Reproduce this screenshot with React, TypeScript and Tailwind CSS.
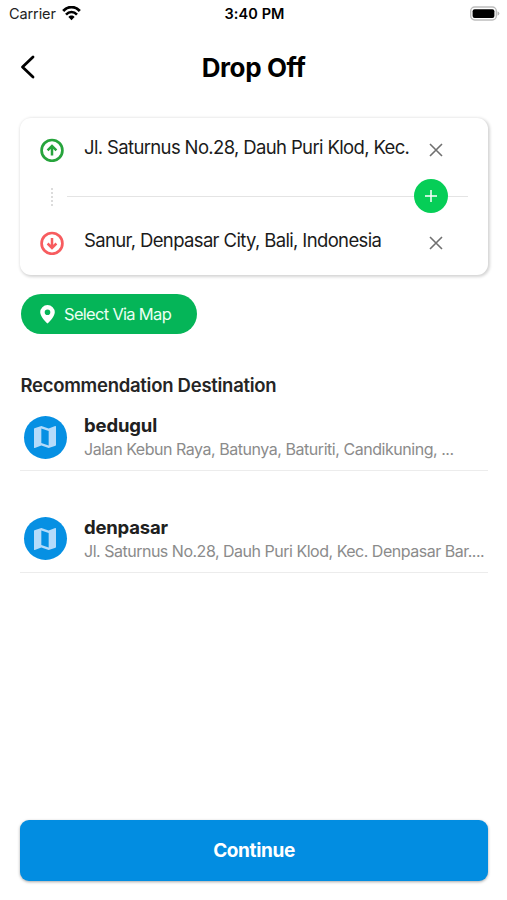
import React from "react";

function StatusBar() {
  return (
    <div className="grid h-7 grid-cols-3 items-center pr-[7px] pl-[9px]">
      <div className="flex items-center gap-[6px]">
        <span className="text-[14.5px] leading-[28px] tracking-[-0.1px] text-[#222]">Carrier</span>
        <svg width="19" height="15" viewBox="0 0 19 15" fill="none" className="-mt-[2px]">
          <path d="M1.2 5C5.8-0.2 13.2-0.2 17.8 5" stroke="#000" strokeWidth="2.8" />
          <path d="M4 8.6C7.2 5.2 11.8 5.2 15 8.6" stroke="#000" strokeWidth="2.6" />
          <path d="M6.4 11C8.1 9.1 10.9 9.1 12.6 11L9.5 14.2Z" fill="#000" />
        </svg>
      </div>
      <span className="text-center text-[14.5px] leading-[28px] font-semibold tracking-[0.1px] whitespace-nowrap text-black">3:40 PM</span>
      <svg width="31" height="15" viewBox="0 0 31 15" className="-mt-[2px] justify-self-end">
        <rect x="1.7" y="1" width="25.6" height="13" rx="4" fill="#fff" stroke="#bdbdbd" strokeWidth="1.4" />
        <rect x="3.6" y="3.2" width="21.8" height="8.8" rx="2" fill="#000" />
        <path d="M28.5 5.2Q30.4 6 30.4 7.5Q30.4 9 28.5 9.8Z" fill="#b5b5b5" />
      </svg>
    </div>
  );
}

function ArrowCircle({ direction }: { direction: "up" | "down" }) {
  const up = direction === "up";
  return (
    <svg width="24" height="24" viewBox="0 0 24 24" fill="none" stroke={up ? "#27a43c" : "#f75c5f"} className="shrink-0">
      <circle cx="12" cy="12.4" r="10.4" strokeWidth="2.7" />
      <path d={up ? "M12 17.6V8.4M7.6 12.3L12 7.9L16.4 12.3" : "M12 7V16.4M7.6 12.5L12 16.9L16.4 12.5"} strokeWidth="2.5" />
    </svg>
  );
}

function Clear() {
  return (
    <svg width="14" height="14" viewBox="0 0 14 14" stroke="#707070" strokeWidth="1.6" className="shrink-0">
      <path d="M1 1L13 13M13 1L1 13" />
    </svg>
  );
}

function Stop({ direction, text }: { direction: "up" | "down"; text: string }) {
  return (
    <div className="flex h-16 items-center pl-5">
      <ArrowCircle direction={direction} />
      <span className="mb-[6px] ml-5 w-[345px] text-[18.5px] leading-6 tracking-[-0.64px] whitespace-nowrap text-[#1b1b1b]">{text}</span>
      <Clear />
    </div>
  );
}

function Place({ name, address, tracking, nameTracking }: { name: string; address: string; tracking: string; nameTracking: string }) {
  return (
    <li className="flex h-[62px] items-start border-b-[1.5px] border-[#ececec] pt-[7px] pl-[3px]">
      <span className="-mt-[0.5px] ml-[0.5px] flex size-[43px] shrink-0 items-center justify-center rounded-full bg-[#0690e3]">
        <svg width="22" height="22" viewBox="3 3 18 18">
          <path
            fill="#b5dbfa"
            d="M20.5 3l-.16.03L15 5.1 9 3 3.36 4.9c-.21.07-.36.25-.36.48V20.5c0 .28.22.5.5.5l.16-.03L9 18.9l6 2.1 5.64-1.9c.21-.07.36-.25.36-.48V3.5c0-.28-.22-.5-.5-.5zM15 19l-6-2.11V5l6 2.11V19z"
          />
        </svg>
      </span>
      <div className="ml-[17.5px]">
        <p className={`mt-[-2px] text-[18.5px] leading-[22px] font-bold text-[#202020] ${nameTracking}`}>{name}</p>
        <p className={`mt-[2px] text-[16px] leading-[22px] whitespace-nowrap text-[#8b8b8b] ${tracking}`}>{address}</p>
      </div>
    </li>
  );
}

export default function App() {
  return (
    <main className="flex h-[900px] w-[507px] flex-col overflow-hidden bg-white font-['Inter','Liberation_Sans',sans-serif]">
      <StatusBar />
      <header className="grid h-[78px] grid-cols-[40px_1fr_40px] items-center px-5">
        <svg width="15" height="24" viewBox="0 0 15 24" fill="none" stroke="#000" strokeWidth="2.8" strokeLinecap="round" strokeLinejoin="round">
          <path d="M13 2L2.5 12L13 22" />
        </svg>
        <h1 className="mt-px text-center text-[26px] leading-8 font-bold tracking-[-0.4px] text-black">Drop Off</h1>
      </header>

      <section className="mx-5 mt-3 h-[157px] w-[468px] rounded-[11px] bg-white shadow-[1px_1px_3px_1px_rgba(0,0,0,0.17)]">
        <Stop direction="up" text="Jl. Saturnus No.28, Dauh Puri Klod, Kec." />
        <div className="flex h-[29px] items-center pr-[20px] pl-[31px]">
          <span className="h-[18px] border-l-2 border-dotted border-[#dcdcdc]" />
          <span className="ml-[14px] h-[1.5px] flex-1 bg-[#e4e4e4]" />
          <button className="-mt-px flex size-[34px] shrink-0 items-center justify-center rounded-full bg-[#06ce57]">
            <svg width="12" height="12" viewBox="0 0 12 12" stroke="#fff" strokeWidth="1.5">
              <path d="M6 0V12M0 6H12" />
            </svg>
          </button>
          <span className="h-[1.5px] w-5 bg-[#e4e4e4]" />
        </div>
        <Stop direction="down" text="Sanur, Denpasar City, Bali, Indonesia" />
      </section>

      <button className="mt-[19px] ml-[20.5px] flex h-10 w-[176px] items-center rounded-full bg-[#05b558] pl-[19.5px] text-[#ecfff3]">
        <svg width="15" height="19" viewBox="0 0 15 19" fill="#fff" fillRule="evenodd">
          <path d="M7.5 0A7.3 7.3 0 0 0 .2 7.3C.2 12.1 7.5 18.5 7.5 18.5S14.8 12.1 14.8 7.3A7.3 7.3 0 0 0 7.5 0ZM7.5 4.4A2.8 2.8 0 1 1 7.5 10A2.8 2.8 0 0 1 7.5 4.4Z" />
        </svg>
        <span className="ml-[9px] text-[16.5px] leading-6 tracking-[-0.7px] whitespace-nowrap">Select Via Map</span>
      </button>

      <h2 className="mt-[39px] ml-[20.5px] text-[18.5px] leading-6 font-semibold tracking-[-0.27px] text-[#252525]">Recommendation Destination</h2>
      <ul className="mx-5 mt-[12px] flex w-[468px] flex-col gap-[39.5px]">
        <Place name="bedugul" address="Jalan Kebun Raya, Batunya, Baturiti, Candikuning, ..." tracking="tracking-[-0.46px]" nameTracking="tracking-[-0.15px]" />
        <Place name="denpasar" address="Jl. Saturnus No.28, Dauh Puri Klod, Kec. Denpasar Bar...." tracking="tracking-[-0.49px]" nameTracking="tracking-[-0.2px]" />
      </ul>

      <button className="mx-5 mt-auto mb-[19px] h-[61px] w-[468px] rounded-[9px] bg-[#028de1] pt-px text-[19px] font-bold tracking-[-0.36px] text-white shadow-[0_1px_3px_rgba(0,0,0,0.35)]">
        Continue
      </button>
    </main>
  );
}
